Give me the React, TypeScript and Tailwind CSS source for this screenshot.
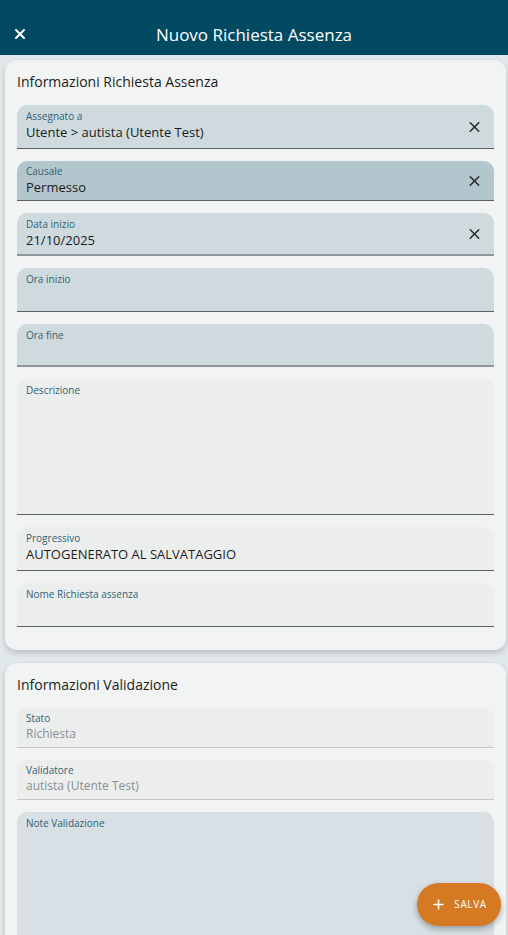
import { X, Plus } from "lucide-react";

type FieldProps = {
  label: string;
  value?: string;
  bg: string;
  h: string;
  clear?: boolean;
  muted?: boolean;
  tight?: boolean;
  line?: string;
};

function Field({ label, value, bg, h, clear, muted, tight, line = "border-[#5a5f62]" }: FieldProps) {
  return (
    <div className={`relative ${h} ${bg} rounded-t-[10px] border-b ${line} px-[9px] ${tight ? "pt-[3px]" : "pt-[4px]"}`}>
      <div className="text-[10px] leading-[14px] text-[#2f5f73]">{label}</div>
      {value && (
        <div className={`${muted ? "text-[12px] text-[#8a8f92]" : "text-[13px] text-[#1c1c1c]"} leading-[18px]`}>{value}</div>
      )}
      {clear && (
        <X className="absolute right-[11px] top-1/2 -translate-y-1/2 w-[17px] h-[17px] text-[#2a2a2a]" strokeWidth={2.2} />
      )}
    </div>
  );
}

export default function App() {
  return (
    <div className="relative w-[508px] h-[935px] overflow-hidden bg-[#e2e9ec] font-['Open_Sans',sans-serif]">
      <div className="h-[55px] bg-[#014a62] flex items-center relative pt-[14px]">
        <X className="absolute left-[12px] top-[26px] w-[16px] h-[16px] text-white" strokeWidth={3} />
        <div className="w-full text-center text-white text-[17px] leading-[24px]">Nuovo Richiesta Assenza</div>
      </div>

      <div className="ml-[5px] mr-[2px] mt-[5px] bg-[#f2f4f4] rounded-[12px] shadow-[0_3px_6px_rgba(0,0,0,0.18)] px-[12px] pt-[12px] pb-[23px]">
        <div className="text-[14px] leading-[20px] text-[#1c1c1c] mb-[13px]">Informazioni Richiesta Assenza</div>
        <div className="flex flex-col gap-[12px]">
          <Field label="Assegnato a" value="Utente > autista (Utente Test)" bg="bg-[#cfdadf]" h="h-[44px]" clear />
          <Field label="Causale" value="Permesso" bg="bg-[#b4c6cd]" h="h-[40px]" clear tight />
          <Field label="Data inizio" value="21/10/2025" bg="bg-[#cfdadf]" h="h-[43px]" clear line="border-[#8f9598] border-b-2" />
          <Field label="Ora inizio" bg="bg-[#cfdadf]" h="h-[44px]" />
          <Field label="Ora fine" bg="bg-[#cfdadf]" h="h-[43px]" line="border-[#8f9598] border-b-2" />
          <Field label="Descrizione" bg="bg-[#eceeee]" h="h-[136px]" />
          <Field label="Progressivo" value="AUTOGENERATO AL SALVATAGGIO" bg="bg-[#eceeee]" h="h-[44px]" />
          <Field label="Nome Richiesta assenza" bg="bg-[#eceeee]" h="h-[44px]" />
        </div>
      </div>

      <div className="ml-[5px] mr-[2px] mt-[13px] bg-[#f2f4f4] rounded-[12px] shadow-[0_3px_6px_rgba(0,0,0,0.18)] px-[12px] pt-[12px] pb-[24px]">
        <div className="text-[14px] leading-[20px] text-[#1c1c1c] mb-[13px]">Informazioni Validazione</div>
        <div className="flex flex-col gap-[12px]">
          <Field label="Stato" value="Richiesta" bg="bg-[#eceeee]" h="h-[40px]" muted tight line="border-[#c3c7c9]" />
          <Field label="Validatore" value="autista (Utente Test)" bg="bg-[#eceeee]" h="h-[40px]" muted tight line="border-[#c3c7c9]" />
          <Field label="Note Validazione" bg="bg-[#d8e0e5]" h="h-[136px]" />
        </div>
      </div>

      <button className="absolute left-[417px] top-[883px] w-[84px] h-[43px] rounded-full bg-[#d57a22] shadow-[0_3px_6px_rgba(0,0,0,0.3)] flex items-center justify-center gap-[8px] text-white">
        <Plus className="w-[15px] h-[15px]" strokeWidth={2.5} />
        <span className="text-[10px] tracking-[0.06em] font-medium">SALVA</span>
      </button>
    </div>
  );
}
